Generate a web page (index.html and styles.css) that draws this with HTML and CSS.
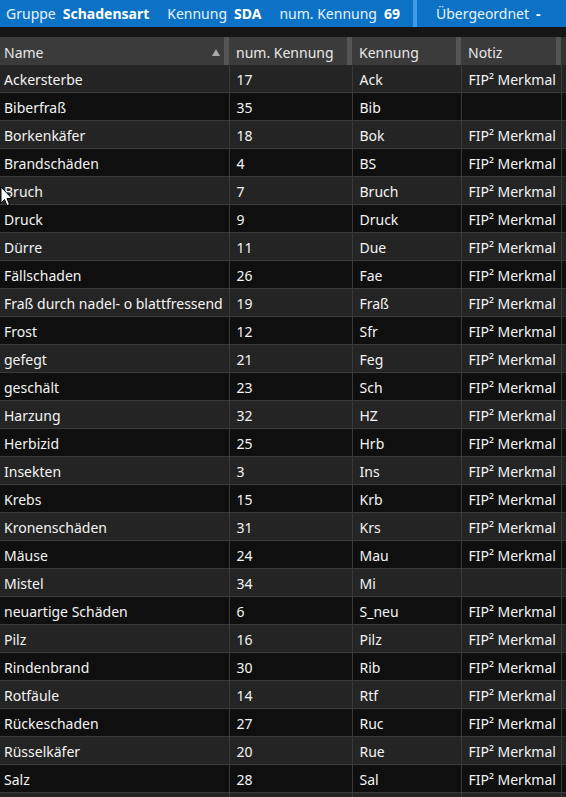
FILE: index.html
```html
<!DOCTYPE html>
<html lang="de">
<head>
<meta charset="utf-8">
<title>Schadensart</title>
<link rel="stylesheet" href="styles.css">
</head>
<body>
<div class="topbar">
  <div class="panel">
    <span class="lbl">Gruppe</span><span class="val">Schadensart</span>
    <span class="lbl gapl">Kennung</span><span class="val">SDA</span>
    <span class="lbl gapl">num. Kennung</span><span class="val">69</span>
  </div>
  <div class="sep"></div>
  <div class="panel right">
    <span class="lbl">Übergeordnet</span><span class="val">-</span>
  </div>
</div>
<div class="band"></div>
<table class="grid">
  <colgroup>
    <col class="c1"><col class="c2"><col class="c3"><col class="c4"><col class="c5">
  </colgroup>
  <thead>
    <tr>
      <th class="first"><div class="hcell"><span>Name</span><svg class="sort" width="8" height="7" viewBox="0 0 8 7"><path d="M4 0 L8 7 L0 7 Z" fill="#a8a8a8"/></svg></div></th>
      <th>num. Kennung</th>
      <th>Kennung</th>
      <th>Notiz</th>
      <th class="fill"></th>
    </tr>
  </thead>
  <tbody>
    <tr><td>Ackersterbe</td><td>17</td><td>Ack</td><td>FIP² Merkmal</td><td></td></tr>
    <tr><td>Biberfraß</td><td>35</td><td>Bib</td><td></td><td></td></tr>
    <tr><td>Borkenkäfer</td><td>18</td><td>Bok</td><td>FIP² Merkmal</td><td></td></tr>
    <tr><td>Brandschäden</td><td>4</td><td>BS</td><td>FIP² Merkmal</td><td></td></tr>
    <tr><td>Bruch</td><td>7</td><td>Bruch</td><td>FIP² Merkmal</td><td></td></tr>
    <tr><td>Druck</td><td>9</td><td>Druck</td><td>FIP² Merkmal</td><td></td></tr>
    <tr><td>Dürre</td><td>11</td><td>Due</td><td>FIP² Merkmal</td><td></td></tr>
    <tr><td>Fällschaden</td><td>26</td><td>Fae</td><td>FIP² Merkmal</td><td></td></tr>
    <tr><td>Fraß durch nadel- o blattfressend</td><td>19</td><td>Fraß</td><td>FIP² Merkmal</td><td></td></tr>
    <tr><td>Frost</td><td>12</td><td>Sfr</td><td>FIP² Merkmal</td><td></td></tr>
    <tr><td>gefegt</td><td>21</td><td>Feg</td><td>FIP² Merkmal</td><td></td></tr>
    <tr><td>geschält</td><td>23</td><td>Sch</td><td>FIP² Merkmal</td><td></td></tr>
    <tr><td>Harzung</td><td>32</td><td>HZ</td><td>FIP² Merkmal</td><td></td></tr>
    <tr><td>Herbizid</td><td>25</td><td>Hrb</td><td>FIP² Merkmal</td><td></td></tr>
    <tr><td>Insekten</td><td>3</td><td>Ins</td><td>FIP² Merkmal</td><td></td></tr>
    <tr><td>Krebs</td><td>15</td><td>Krb</td><td>FIP² Merkmal</td><td></td></tr>
    <tr><td>Kronenschäden</td><td>31</td><td>Krs</td><td>FIP² Merkmal</td><td></td></tr>
    <tr><td>Mäuse</td><td>24</td><td>Mau</td><td>FIP² Merkmal</td><td></td></tr>
    <tr><td>Mistel</td><td>34</td><td>Mi</td><td></td><td></td></tr>
    <tr><td>neuartige Schäden</td><td>6</td><td>S_neu</td><td>FIP² Merkmal</td><td></td></tr>
    <tr><td>Pilz</td><td>16</td><td>Pilz</td><td>FIP² Merkmal</td><td></td></tr>
    <tr><td>Rindenbrand</td><td>30</td><td>Rib</td><td>FIP² Merkmal</td><td></td></tr>
    <tr><td>Rotfäule</td><td>14</td><td>Rtf</td><td>FIP² Merkmal</td><td></td></tr>
    <tr><td>Rückeschaden</td><td>27</td><td>Ruc</td><td>FIP² Merkmal</td><td></td></tr>
    <tr><td>Rüsselkäfer</td><td>20</td><td>Rue</td><td>FIP² Merkmal</td><td></td></tr>
    <tr><td>Salz</td><td>28</td><td>Sal</td><td>FIP² Merkmal</td><td></td></tr>
    <tr><td>&nbsp;</td><td></td><td></td><td></td><td></td></tr>
  </tbody>
</table>
<svg class="cursor" width="14" height="22" viewBox="0 0 14 22">
  <path d="M1 1 L1 17 L4.5 13.5 L7 19.5 L9.5 18.5 L7 12.5 L12 12.5 Z" fill="#fff" stroke="#000" stroke-width="1" stroke-linejoin="miter"/>
</svg>
</body>
</html>
```

FILE: styles.css
```css
html, body {
  margin: 0;
  padding: 0;
  background: #111111;
  overflow: hidden;
}
body {
  width: 566px;
  height: 797px;
  position: relative;
  font-family: "Noto Sans", "Open Sans", sans-serif;
  font-size: 14px;
  color: #f4f4f4;
}
.topbar {
  display: flex;
  height: 27px;
  background: #0a74cc;
}
.panel {
  display: flex;
  align-items: center;
  width: 413px;
  padding-left: 6px;
  box-sizing: border-box;
  background: #0b72c6;
}
.panel.right {
  flex: 1;
  padding-left: 19px;
}
.sep {
  width: 4px;
  background: #3f9be6;
}
.lbl {
  color: #e8f2fb;
  margin-right: 7px;
}
.lbl.gapl {
  margin-left: 18px;
}
.val {
  font-weight: 700;
  color: #ffffff;
}
.band {
  height: 10px;
  background: #151515;
}
.grid {
  border-collapse: collapse;
  table-layout: fixed;
  width: 566px;
}
.c1 { width: 229px; }
.c2 { width: 123px; }
.c3 { width: 109px; }
.c4 { width: 100px; }
.c5 { width: 5px; }
.grid th {
  height: 28px;
  padding: 2px 0 0 7px;
  box-sizing: border-box;
  text-align: left;
  font-weight: 400;
  color: #e8e8e8;
  background: #3b3b3b;
  box-shadow: inset -5px 0 0 #545454;
  white-space: nowrap;
  overflow: hidden;
}
.grid th.first {
  padding-left: 4px;
  padding-right: 9px;
}
.hcell {
  display: flex;
  align-items: center;
  justify-content: space-between;
}
.sort {
  display: block;
  margin-top: 1px;
}
.grid th.fill {
  background: #333333;
  box-shadow: none;
  padding: 0;
}
.grid td {
  height: 26px;
  padding: 1px 0 0 7px;
  border: 1px solid #3a3a3a;
  border-top: none;
  white-space: nowrap;
  overflow: hidden;
}
.grid td:first-child {
  padding-left: 4px;
  border-left: none;
}
.grid td:last-child {
  border-right: none;
  padding: 0;
}
.grid tbody tr:nth-child(odd) td {
  background: #242424;
}
.grid tbody tr:nth-child(even) td {
  background: #0f0f0f;
}
.cursor {
  position: absolute;
  left: 0;
  top: 186px;
}
```
